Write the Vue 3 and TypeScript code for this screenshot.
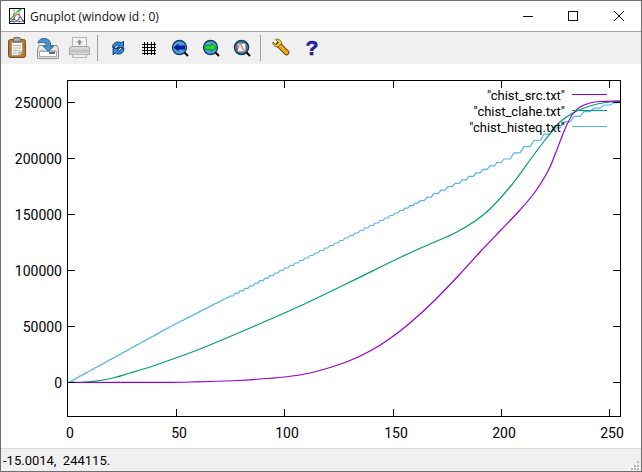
<script setup lang="ts">
type Pt = [number, number]

const purple: Pt[] = [[68,382.5],[170,382.3],[197,381.8],[237,380.5],[260,379],[285,377],[310,373],[330,367.5],[350,360.5],[370,351],[390,338.5],[410,323],[435,300],[460,274],[480,252],[500,231],[520,210],[535,192],[548,171],[556,152],[565,129],[572,115],[580,107],[590,103],[600,101.5],[620.5,101]]
const green: Pt[] = [[68,382.5],[85,382],[100,380.5],[115,377.5],[130,373],[150,367],[170,360],[200,349],[250,328],[300,306],[350,282],[400,257.5],[430,244],[455,233],[475,221],[490,209],[510,187],[530,160],[545,140],[560,122],[575,112],[590,106],[605,102.5],[620.5,101]]
const blueKnots: Pt[] = [[68,382.5],[100,365],[170,326.5],[280,270.5],[392,214.5],[505,158.5],[530,143],[560,124],[580,113],[600,106],[620.5,101]]

function smooth(p: Pt[]): string {
  let d = `M${p[0][0]} ${p[0][1]}`
  for (let i = 0; i < p.length - 1; i++) {
    const a = p[Math.max(i - 1, 0)], b = p[i], c = p[i + 1], e = p[Math.min(i + 2, p.length - 1)]
    const c1x = b[0] + (c[0] - a[0]) / 6, c1y = b[1] + (c[1] - a[1]) / 6
    const c2x = c[0] - (e[0] - b[0]) / 6, c2y = c[1] - (e[1] - b[1]) / 6
    d += `C${c1x.toFixed(1)} ${c1y.toFixed(1)} ${c2x.toFixed(1)} ${c2y.toFixed(1)} ${c[0]} ${c[1]}`
  }
  return d
}

function lerp(p: Pt[], x: number): number {
  for (let i = 0; i < p.length - 1; i++) {
    if (x <= p[i + 1][0]) {
      const t = (x - p[i][0]) / (p[i + 1][0] - p[i][0])
      return p[i][1] + t * (p[i + 1][1] - p[i][1])
    }
  }
  return p[p.length - 1][1]
}

function stairs(p: Pt[]): string {
  let x = 68
  let d = `M68 382.5`
  while (x < 620.5) {
    const w = x < 230 ? 3 : x < 420 ? 5 : x < 500 ? 7 : 10
    const nx = Math.min(x + w, 620.5)
    const ny = lerp(p, nx)
    const run = x < 230 ? 0.4 : 0.6
    const mx = x + (nx - x) * run
    d += `L${mx.toFixed(1)} ${lerp(p, x).toFixed(1)}L${nx.toFixed(1)} ${ny.toFixed(1)}`
    x = nx
  }
  return d
}

const purplePath = smooth(purple)
const greenPath = smooth(green)
const bluePath = stairs(blueKnots)

const xTicks = [
  { x: 67.5, label: '0' }, { x: 176.5, label: '50' }, { x: 284.5, label: '100' },
  { x: 393.5, label: '150' }, { x: 501.5, label: '200' }, { x: 609.5, label: '250' }
]
const yTicks = [
  { y: 382.5, label: '0' }, { y: 326.5, label: '50000' }, { y: 270.5, label: '100000' },
  { y: 214.5, label: '150000' }, { y: 158.5, label: '200000' }, { y: 102.5, label: '250000' }
]
const legend = [
  { y: 94.5, label: '"chist_src.txt"', color: '#9400d3' },
  { y: 110.5, label: '"chist_clahe.txt"', color: '#009e73' },
  { y: 126.5, label: '"chist_histeq.txt"', color: '#56b4e9' }
]
const gridV = [7.5, 10.5, 14.5, 17.5]
const gridH = [8.5, 11.5, 14.5, 17.5]
const statusText = '-15.0014,  244115.'
</script>

<template>
  <div class="window">
    <header class="titlebar">
      <svg class="app-icon" width="16" height="16" viewBox="0 0 16 16">
        <rect x="0.5" y="0.5" width="15" height="15" fill="#fff" stroke="#000" />
        <path d="M1 12 L5 7 L9 3 L13 1" fill="none" stroke="#3fd24a" stroke-width="1.5" />
        <path d="M1 10 L4 12 L7 7 L10 6 L13 11 L15 13" fill="none" stroke="#ee4a4a" />
        <path d="M1 14 L5 11 L8 13 L11 9 L15 14" fill="none" stroke="#3f5fe8" />
        <path d="M0 13.5H16M5 0V16M10 0V16" stroke="#000" stroke-width="0.4" />
      </svg>
      <span class="title">Gnuplot (window id : 0)</span>
      <div class="controls">
        <svg class="ctl" width="45" height="30" viewBox="0 0 45 30"><path d="M17 15.5H27" stroke="#111" /></svg>
        <svg class="ctl" width="45" height="30" viewBox="0 0 45 30"><rect x="17.5" y="10.5" width="9" height="9" fill="none" stroke="#111" /></svg>
        <svg class="ctl" width="45" height="30" viewBox="0 0 45 30"><path d="M18 10L28 20M28 10L18 20" stroke="#111" /></svg>
      </div>
    </header>

    <div class="toolbar">
      <span class="tool">
        <svg width="25" height="25" viewBox="0 0 25 25">
          <rect x="3.5" y="3.5" width="17" height="18" rx="2" fill="#b8772c" stroke="#7d4d16" />
          <path d="M6.5 6.5H17.5V16L14 19.5H6.5Z" fill="#f6f6f2" stroke="#9a9a94" />
          <path d="M8 9.5H16M8 12H16M8 14.5H15M8 17H12" stroke="#b5b5ae" />
          <path d="M14 19.5V16H17.5" fill="#ddd" stroke="#9a9a94" />
          <rect x="8.5" y="1.5" width="7" height="4" rx="1" fill="#a9a9a9" stroke="#6a6a6a" />
        </svg>
      </span>
      <span class="tool">
        <svg width="25" height="25" viewBox="0 0 25 25">
          <path d="M3 9.5H21L22.5 14V21.5Q22.5 22.5 21.5 22.5H2.5Q1.5 22.5 1.5 21.5V14Z" fill="#e6e6e6" stroke="#8c8c8c" />
          <path d="M4 14.5H20" stroke="#bdbdbd" />
          <rect x="3.5" y="15.5" width="17" height="5" fill="#fbfbfb" stroke="#a8a8a8" />
          <path d="M13 17H19" stroke="#5d6c78" stroke-width="2" />
          <path d="M2 7Q3 2 9 2.5Q14 3 14.5 8V10H18L12.5 15.5L7 10H10V8.5Q10 6.5 7 6.5Q4 6.5 2 7Z" fill="#4b8ec9" stroke="#2e6aa3" stroke-linejoin="round" />
        </svg>
      </span>
      <span class="tool">
        <svg width="25" height="25" viewBox="0 0 25 25">
          <path d="M5.5 1.5H19.5V11H5.5Z" fill="#f2f2f2" stroke="#b5b5b5" />
          <path d="M12.5 3.5L15.5 6.5H13.5V9H11.5V6.5H9.5Z" fill="#8a8a8a" />
          <path d="M4 10.5H21Q22.5 11 22.5 13V18.5H2.5V13Q2.5 11 4 10.5Z" fill="#dadada" stroke="#a5a5a5" />
          <rect x="3.5" y="13.5" width="18" height="3" fill="#bfbfbf" />
          <path d="M5.5 18.5H19.5V21.5H5.5Z" fill="#efefef" stroke="#b5b5b5" />
        </svg>
      </span>
      <span class="sep"></span>
      <span class="tool">
        <svg width="25" height="25" viewBox="0 0 25 25">
          <path d="M6.5 11.5C6.5 6.5 11.5 4.5 15.5 7L17.5 5V11.5H11L13.2 9.3C11 8.5 9.5 9.5 9 11.5Z" fill="#2a8be8" stroke="#0a2550" stroke-width="0.8" stroke-linejoin="round" />
          <path d="M18 12.5C18 17.5 13 19.5 9 17L7 19V12.5H13.5L11.3 14.7C13.5 15.5 15 14.5 15.5 12.5Z" fill="#2a8be8" stroke="#0a2550" stroke-width="0.8" stroke-linejoin="round" />
        </svg>
      </span>
      <span class="tool">
        <svg width="25" height="25" viewBox="0 0 25 25">
          <path v-for="g in gridV" :key="'v' + g" :d="`M${g} 6V19`" stroke="#000" />
          <path v-for="g in gridH" :key="'h' + g" :d="`M5 ${g}H19`" stroke="#000" />
        </svg>
      </span>
      <span class="tool">
        <svg width="25" height="25" viewBox="0 0 25 25">
          <circle cx="11.5" cy="11.5" r="7" fill="#4f9fdb" stroke="#123a5c" stroke-width="1.3" />
          <path d="M5.5 11.5L10.5 7.5V9.5H17V13.5H10.5V15.5Z" fill="#0a1a9a" />
          <path d="M16.5 16.5L20 20" stroke="#000" stroke-width="2" />
        </svg>
      </span>
      <span class="tool">
        <svg width="25" height="25" viewBox="0 0 25 25">
          <circle cx="11.5" cy="11.5" r="7" fill="#4f9fdb" stroke="#123a5c" stroke-width="1.3" />
          <path d="M17.5 11.5L12.5 7.5V9.5H6V13.5H12.5V15.5Z" fill="#1de21d" stroke="#0a6a0a" stroke-width="0.6" />
          <path d="M16.5 16.5L20 20" stroke="#000" stroke-width="2" />
        </svg>
      </span>
      <span class="tool">
        <svg width="25" height="25" viewBox="0 0 25 25">
          <circle cx="11.5" cy="11.5" r="7" fill="#4f9fdb" stroke="#123a5c" stroke-width="1.5" />
          <rect x="7" y="7" width="9" height="9" fill="#f7f4f4" stroke="#20304a" stroke-width="0.8" />
          <path d="M7.5 14.5C9 7 11 7 12 11C13 14 14 15 16 15" fill="none" stroke="#e0342f" />
          <path d="M16.5 16.5L20 20" stroke="#000" stroke-width="2" />
        </svg>
      </span>
      <span class="sep late"></span>
      <span class="tool">
        <svg width="25" height="25" viewBox="0 0 25 25">
          <path d="M9.5 8.5L17.5 16.5" stroke="#5f3d08" stroke-width="5.5" stroke-linecap="round" />
          <path d="M9.5 8.5L17.5 16.5" stroke="#eea91c" stroke-width="3.8" stroke-linecap="round" />
          <path d="M4 6L7 9L9.5 6.5L6.5 3.5C9 2.5 12.5 4 12.5 7.5L9 11C5.5 11 3.5 8.5 4 6Z" fill="#f4d040" stroke="#5f3d08" stroke-width="0.8" stroke-linejoin="round" />
        </svg>
      </span>
      <span class="tool">
        <svg width="25" height="25" viewBox="0 0 25 25">
          <text class="help" x="12" y="19" text-anchor="middle">?</text>
        </svg>
      </span>
    </div>

    <svg class="plot" width="640" height="384" viewBox="1 64 640 384">
      <path :d="bluePath" class="curve" stroke="#56b4e9" />
      <path :d="greenPath" class="curve" stroke="#009e73" />
      <path :d="purplePath" class="curve" stroke="#9400d3" />

      <g v-for="t in xTicks" :key="'x' + t.x">
        <path :d="`M${t.x} 416V409M${t.x} 81V88`" stroke="#000" />
        <text class="lab" :x="t.x + 2.5" y="438" text-anchor="middle">{{ t.label }}</text>
      </g>
      <g v-for="t in yTicks" :key="'y' + t.y">
        <path :d="`M68 ${t.y}H75M620 ${t.y}H613`" stroke="#000" />
        <text class="lab" x="62" :y="t.y + 5" text-anchor="end">{{ t.label }}</text>
      </g>
      <rect x="67.5" y="80.5" width="553" height="336" fill="none" stroke="#000" />

      <g v-for="l in legend" :key="l.label">
        <text class="lab key" x="565" :y="l.y + 5" text-anchor="end">{{ l.label }}</text>
        <path :d="`M572 ${l.y}H607`" :stroke="l.color" />
      </g>
    </svg>

    <footer class="statusbar">
      <span class="status">{{ statusText }}</span>
      <svg class="grip" width="10" height="10" viewBox="0 0 10 10">
        <path d="M7 0h2v2h-2zM4 4h2v2h-2zM7 4h2v2h-2zM1 7h2v2h-2zM4 7h2v2h-2zM7 7h2v2h-2z" fill="#b4b4b4" />
      </svg>
    </footer>
  </div>
</template>

<style scoped>
.window {
  box-sizing: border-box;
  width: 642px;
  height: 472px;
  display: flex;
  flex-direction: column;
  background: #fff;
  border: 1px solid #6f6f6f;
  font-family: "Liberation Sans", Arial, sans-serif;
  color: #000;
  overflow: hidden;
}
.titlebar {
  box-sizing: border-box;
  height: 31px;
  flex: none;
  display: flex;
  align-items: center;
  padding-left: 8px;
  background: #fff;
  border-bottom: 1px solid #a6a6a6;
}
.app-icon { flex: none; }
.title {
  margin-left: 5px;
  font-family: "Open Sans", "Noto Sans", sans-serif;
  font-size: 12px;
  color: #111;
  white-space: nowrap;
}
.controls { margin-left: auto; display: flex; height: 30px; }
.ctl { display: block; }
.toolbar {
  box-sizing: border-box;
  height: 32px;
  flex: none;
  display: flex;
  align-items: flex-start;
  padding: 4px 0 0 1px;
  background: #f0f0f0;
}
.tool {
  width: 31px;
  height: 25px;
  padding-left: 3px;
  box-sizing: border-box;
  flex: none;
}
.tool svg { display: block; }
.sep {
  flex: none;
  width: 1px;
  height: 26px;
  margin: -1px 5px 0 2px;
  background: #a0a0a0;
}
.help {
  font-family: "Liberation Sans", sans-serif;
  font-weight: 700;
  font-size: 21px;
  fill: #2626b8;
  stroke: #0b0b55;
  stroke-width: 0.5px;
}
.plot { display: block; flex: none; background: #fff; }
.curve { fill: none; stroke-width: 1.2; }
.lab {
  font-family: Roboto, "Liberation Sans", sans-serif;
  font-size: 14px;
  fill: #000;
}
.lab.key { font-size: 13px; }
.statusbar {
  position: relative;
  box-sizing: border-box;
  flex: 1;
  min-height: 0;
  display: flex;
  align-items: center;
  padding-left: 2px;
  background: #f0f0f0;
  border-top: 1px solid #d9d9d9;
}
.status {
  font-family: Roboto, "Liberation Sans", sans-serif;
  font-size: 13px;
  white-space: pre;
}
.grip { position: absolute; right: 1px; bottom: 0; }
</style>
